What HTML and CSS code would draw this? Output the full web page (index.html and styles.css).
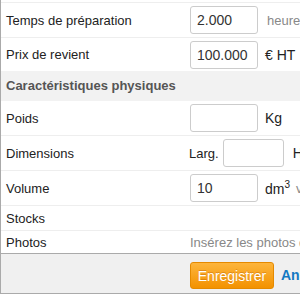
FILE: index.html
```html
<!DOCTYPE html>
<html lang="fr">
<head>
  <meta charset="UTF-8">
  <title>Produit</title>
  <link rel="stylesheet" href="styles.css">
</head>
<body>
  <div class="panel">
    <ul class="fields">
      <li class="row">
        <span class="label">Temps de préparation</span>
        <span class="value"><input type="text" value="2.000"> <span class="unit muted hours">heures</span></span>
      </li>
      <li class="row last">
        <span class="label">Prix de revient</span>
        <span class="value"><input type="text" value="100.000"> <span class="unit">€ HT</span> <span class="muted">/ unité</span></span>
      </li>
      <li class="section">Caractéristiques physiques</li>
      <li class="row">
        <span class="label">Poids</span>
        <span class="value"><input type="text"> <span class="unit">Kg</span></span>
      </li>
      <li class="row">
        <span class="label">Dimensions</span>
        <span class="value dims">Larg. <input type="text" class="small"> <span class="unit">H</span></span>
      </li>
      <li class="row">
        <span class="label">Volume</span>
        <span class="value"><input type="text" value="10"> <span class="unit">dm<sup>3</sup></span> <span class="muted">volume</span></span>
      </li>
      <li class="row thin">
        <span class="label">Stocks</span>
        <span class="value"></span>
      </li>
      <li class="row thin noline">
        <span class="label">Photos</span>
        <span class="value muted">Insérez les photos dans la galerie</span>
      </li>
    </ul>
    <div class="footer">
      <button class="save">Enregistrer</button>
      <a href="#" class="cancel">Annuler</a>
    </div>
  </div>
</body>
</html>
```

FILE: styles.css
```css
* {
  box-sizing: border-box;
  padding: 0;
  margin: 0;
}
body {
  width: 300px;
  height: 300px;
  overflow: hidden;
  color: #222;
  font-family: 'Liberation Sans', Arial, sans-serif;
  font-size: 13px;
}
.panel {
  width: 420px;
  border-left: 1px solid #aaa;
  padding-top: 2px;
}
ul.fields {
  list-style: none;
  border-top: 1px solid #eee;
}
.row {
  display: flex;
  align-items: center;
  height: 35px;
  border-bottom: 1px solid #eee;
  white-space: nowrap;
}
.row.last {
  border-bottom: none;
  height: 33px;
}
.row.thin {
  height: 25px;
}
.row.thin.noline {
  height: 22px;
  border-bottom: none;
}
.label {
  width: 188px;
  padding-left: 5px;
}
.value {
  display: flex;
  align-items: center;
  gap: 6px;
}
.value input {
  width: 68px;
  height: 28px;
  margin-left: 1px;
  padding: 0 6px;
  border: 1px solid #ccc;
  border-radius: 3px;
  font: inherit;
  font-size: 14px;
  color: #333;
  outline: none;
}
.value input.small {
  width: 61px;
  margin-left: 0;
  margin-right: 4px;
}
.dims {
  gap: 4px;
}
.unit {
  font-size: 14px;
  margin-left: 1px;
}
.unit.hours {
  margin-left: 3px;
  font-size: 13px;
}
.unit sup {
  font-size: 10px;
  vertical-align: 6px;
}
.muted {
  color: #888;
  font-size: 13px;
}
.value.muted {
  padding-left: 1px;
}
.section {
  height: 30px;
  line-height: 30px;
  padding-left: 5px;
  background: #f2f2f2;
  color: #555;
  font-weight: bold;
}
.footer {
  height: 41px;
  border-top: 1px solid #aaa;
  border-bottom: 1px solid #aaa;
  background: #f0f0f0;
  padding: 8px 0 0 189px;
  display: flex;
  align-items: flex-start;
  gap: 7px;
}
.save {
  width: 84px;
  height: 27px;
  border: 1px solid #e58a00;
  border-radius: 3px;
  background: linear-gradient(#fdb53c, #f39200);
  color: #fff;
  font: inherit;
  font-size: 14px;
  text-shadow: 0 -1px 0 rgba(180, 90, 0, 0.4);
}
.cancel {
  color: #1479c2;
  font-weight: bold;
  font-size: 14px;
  text-decoration: none;
  line-height: 27px;
}
```
